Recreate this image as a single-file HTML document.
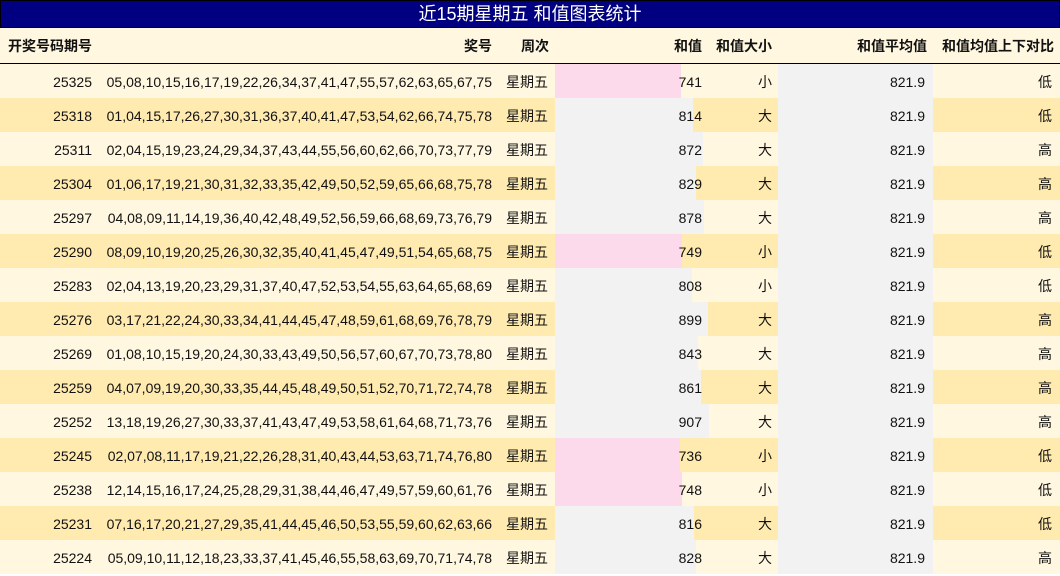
<!DOCTYPE html>
<html><head><meta charset="utf-8"><style>
*{margin:0;padding:0;box-sizing:border-box}
body{width:1060px;height:575px;background:#fff;font-family:"Liberation Sans","Noto Sans CJK SC",sans-serif;font-size:14px;color:#111;overflow:hidden;position:relative}
.title{position:absolute;left:0;top:0;width:1060px;height:28px;background:#000080;border:1px solid #000;color:#fff;font-size:18px;text-align:center;line-height:27px}
.row{position:absolute;left:0;width:1060px;height:34px;line-height:36px}
.c{position:absolute;top:0;height:34px;text-align:right;padding-right:6px;white-space:nowrap}
.hdr{top:28px;height:36px;background:#fff7e0;border-bottom:1.5px solid #000;font-weight:bold}
.hdr .c{height:34px;line-height:36px}
.bar{position:absolute;left:555px;top:0;height:34px}
</style></head><body>
<div class="title">近15期星期五 和值图表统计</div>
<div class="row hdr">
<div class="c" style="left:0;width:100px;text-align:left;padding-left:8px">开奖号码期号</div>
<div class="c" style="left:100px;width:398px">奖号</div>
<div class="c" style="left:498px;width:57px">周次</div>
<div class="c" style="left:555px;width:153px">和值</div>
<div class="c" style="left:708px;width:70px">和值大小</div>
<div class="c" style="left:778px;width:155px">和值平均值</div>
<div class="c" style="left:933px;width:127px">和值均值上下对比</div>
</div>
<div id="rows"></div>
<script>
var d=[["25325","05,08,10,15,16,17,19,22,26,34,37,41,47,55,57,62,63,65,67,75",741,"小","低"],
["25318","01,04,15,17,26,27,30,31,36,37,40,41,47,53,54,62,66,74,75,78",814,"大","低"],
["25311","02,04,15,19,23,24,29,34,37,43,44,55,56,60,62,66,70,73,77,79",872,"大","高"],
["25304","01,06,17,19,21,30,31,32,33,35,42,49,50,52,59,65,66,68,75,78",829,"大","高"],
["25297","04,08,09,11,14,19,36,40,42,48,49,52,56,59,66,68,69,73,76,79",878,"大","高"],
["25290","08,09,10,19,20,25,26,30,32,35,40,41,45,47,49,51,54,65,68,75",749,"小","低"],
["25283","02,04,13,19,20,23,29,31,37,40,47,52,53,54,55,63,64,65,68,69",808,"小","低"],
["25276","03,17,21,22,24,30,33,34,41,44,45,47,48,59,61,68,69,76,78,79",899,"大","高"],
["25269","01,08,10,15,19,20,24,30,33,43,49,50,56,57,60,67,70,73,78,80",843,"大","高"],
["25259","04,07,09,19,20,30,33,35,44,45,48,49,50,51,52,70,71,72,74,78",861,"大","高"],
["25252","13,18,19,26,27,30,33,37,41,43,47,49,53,58,61,64,68,71,73,76",907,"大","高"],
["25245","02,07,08,11,17,19,21,22,26,28,31,40,43,44,53,63,71,74,76,80",736,"小","低"],
["25238","12,14,15,16,17,24,25,28,29,31,38,44,46,47,49,57,59,60,61,76",748,"小","低"],
["25231","07,16,17,20,21,27,29,35,41,44,45,46,50,53,55,59,60,62,63,66",816,"大","低"],
["25224","05,09,10,11,12,18,23,33,37,41,45,46,55,58,63,69,70,71,74,78",828,"大","高"]];
var h="";
d.forEach(function(r,i){
var bg=i%2?"#ffeab0":"#fff7e0";
var bc=r[2]<800?"#fcd9eb":"#f2f2f2";
h+='<div class="row" style="top:'+(64+i*34)+'px;background:'+bg+'">'+
'<div class="bar" style="width:'+Math.round(r[2]*0.17)+'px;background:'+bc+'"></div>'+
'<div style="position:absolute;left:778px;top:0;width:155px;height:34px;background:#f2f2f2"></div>'+
'<div class="c" style="left:0;width:100px;padding-right:8px">'+r[0]+'</div>'+
'<div class="c" style="left:100px;width:398px;padding-right:6px">'+r[1]+'</div>'+
'<div class="c" style="left:498px;width:57px;padding-right:7px">星期五</div>'+
'<div class="c" style="left:555px;width:153px">'+r[2]+'</div>'+
'<div class="c" style="left:708px;width:70px">'+r[3]+'</div>'+
'<div class="c" style="left:778px;width:155px;padding-right:8px">821.9</div>'+
'<div class="c" style="left:933px;width:127px;padding-right:8px">'+r[4]+'</div></div>';
});
document.getElementById("rows").innerHTML=h;
</script>
</body></html>
